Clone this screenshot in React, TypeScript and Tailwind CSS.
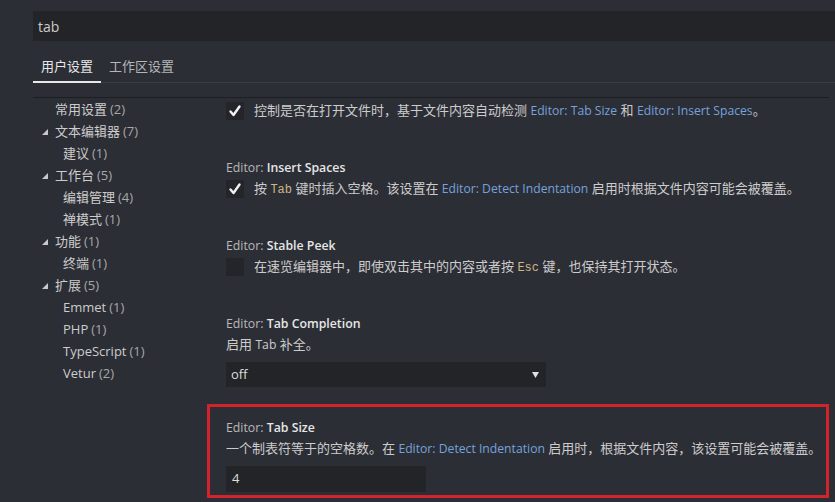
import React from "react";

const font = { fontFamily: '"Open Sans", "Noto Sans CJK SC", sans-serif' };

type TreeItem = { label: string; count: number; level: 0 | 1; arrow?: boolean };

const tree: TreeItem[] = [
  { label: "常用设置", count: 2, level: 0 },
  { label: "文本编辑器", count: 7, level: 0, arrow: true },
  { label: "建议", count: 1, level: 1 },
  { label: "工作台", count: 5, level: 0, arrow: true },
  { label: "编辑管理", count: 4, level: 1 },
  { label: "禅模式", count: 1, level: 1 },
  { label: "功能", count: 1, level: 0, arrow: true },
  { label: "终端", count: 1, level: 1 },
  { label: "扩展", count: 5, level: 0, arrow: true },
  { label: "Emmet", count: 1, level: 1 },
  { label: "PHP", count: 1, level: 1 },
  { label: "TypeScript", count: 1, level: 1 },
  { label: "Vetur", count: 2, level: 1 },
];

const Link = ({ children }: { children: React.ReactNode }) => (
  <span className="text-[#75a2dc] text-[12.2px]">{children}</span>
);

const Code = ({ children }: { children: React.ReactNode }) => (
  <span className="text-[#cdb784] text-[12px]" style={{ fontFamily: '"Liberation Mono", monospace' }}>
    {children}
  </span>
);

const Title = ({ name }: { name: string }) => (
  <div className="h-[21px] leading-[21px] text-[12.3px] text-[#b9b9b9]">
    Editor: <span className="font-semibold text-[#e6e6e6]">{name}</span>
  </div>
);

const Checkbox = ({ checked }: { checked: boolean }) => (
  <div className="w-[18px] h-[18px] bg-[#24252a] flex items-center justify-center shrink-0">
    {checked && (
      <svg width="14" height="14" viewBox="0 0 14 14">
        <path d="M2.5 7.5 L5.5 11 L11.5 2.5" fill="none" stroke="#f2f2f2" strokeWidth="2.4" strokeLinecap="round" strokeLinejoin="round" />
      </svg>
    )}
  </div>
);

const CheckRow = ({ checked, children }: { checked: boolean; children: React.ReactNode }) => (
  <div className="h-[21px] flex items-center gap-[10px] text-[13px] text-[#cccccc] whitespace-nowrap">
    <Checkbox checked={checked} />
    <span>{children}</span>
  </div>
);

export default function App() {
  return (
    <div className="w-[835px] h-[502px] bg-[#2c2e36] overflow-hidden flex flex-col" style={font}>
      <div className="pl-[33px] pt-[11px]">
        <div className="h-[30px] bg-[#232428] px-[5px] flex items-center text-[14px] text-[#cccccc]">tab</div>
      </div>

      <div className="pl-[33px] h-[42px] flex items-end">
        <div className="flex-1 flex items-end border-b border-[#3a3c44] h-full">
          <div className="h-full flex items-center pl-[8px] pr-[8px] pt-[10px] border-b-2 border-[#e8e8e8] -mb-px text-[13px] text-[#e8e8e8]">
            用户设置
          </div>
          <div className="h-full flex items-center px-[8px] pt-[10px] text-[13px] text-[#b6b6b6]">工作区设置</div>
        </div>
      </div>

      <div className="flex flex-1 mt-[14px] min-h-0">
        <div className="w-[207px] shrink-0 flex flex-col pl-[33px]">
          <div className="border-t border-[#1d1e22] flex-1 flex flex-col text-[13px] pt-[1px]">
            {tree.map((t) => (
              <div
                key={t.label}
                className={`h-[22px] flex items-center whitespace-nowrap ${t.level === 1 ? "pl-[17px]" : "pl-[9px]"}`}
              >
                <span className="w-[13px] shrink-0 flex items-center">
                  {t.arrow && (
                    <svg width="6" height="6" viewBox="0 0 6 6">
                      <path d="M6 0 L6 6 L0 6 Z" fill="#c8c8c8" />
                    </svg>
                  )}
                </span>
                <span className="text-[#cccccc]">{t.label}</span>
                <span className="text-[#a8a8a8] ml-[3px]">({t.count})</span>
              </div>
            ))}
          </div>
        </div>

        <div className="flex-1 flex flex-col min-w-0 pr-[6px]">
          <div className="border-t border-[#1d1e22] flex-1 overflow-hidden">
            <div className="pt-[2px] pl-[19px] pb-[24px]">
              <CheckRow checked>
                控制是否在打开文件时，基于文件内容自动检测 <Link>Editor: Tab Size</Link> 和 <Link>Editor: Insert Spaces</Link>。
              </CheckRow>
            </div>

            <div className="pl-[19px] pt-[12px] pb-[24px]">
              <Title name="Insert Spaces" />
              <CheckRow checked>
                按 <Code>Tab</Code> 键时插入空格。该设置在 <Link>Editor: Detect Indentation</Link> 启用时根据文件内容可能会被覆盖。
              </CheckRow>
            </div>

            <div className="pl-[19px] pt-[12px] pb-[24px]">
              <Title name="Stable Peek" />
              <CheckRow checked={false}>
                在速览编辑器中，即使双击其中的内容或者按 <Code>Esc</Code> 键，也保持其打开状态。
              </CheckRow>
            </div>

            <div className="pl-[19px] pt-[12px] pb-[17px]">
              <Title name="Tab Completion" />
              <div className="h-[21px] leading-[21px] text-[13px] text-[#cccccc]">
                启用 <span className="text-[12.2px]">Tab</span> 补全。
              </div>
              <div className="mt-[7px] w-[320px] h-[25px] bg-[#232428] flex items-center justify-between pl-[5px] pr-[7px] text-[13px] text-[#dddddd]">
                <span>off</span>
                <svg width="7" height="6" viewBox="0 0 7 6">
                  <path d="M0 0 L7 0 L3.5 6 Z" fill="#e0e0e0" />
                </svg>
              </div>
            </div>

            <div className="border-[3px] border-[#d2232c] h-[94px] pl-[16px] pt-[10px]">
              <Title name="Tab Size" />
              <div className="h-[21px] leading-[21px] text-[13px] text-[#cccccc] whitespace-nowrap">
                一个制表符等于的空格数。在 <Link>Editor: Detect Indentation</Link> 启用时，根据文件内容，该设置可能会被覆盖。
              </div>
              <div className="mt-[7px] w-[200px] h-[26px] bg-[#232428] flex items-center pl-[6px] text-[13px] text-[#dddddd]">
                4
              </div>
            </div>
          </div>
        </div>
      </div>
    </div>
  );
}
